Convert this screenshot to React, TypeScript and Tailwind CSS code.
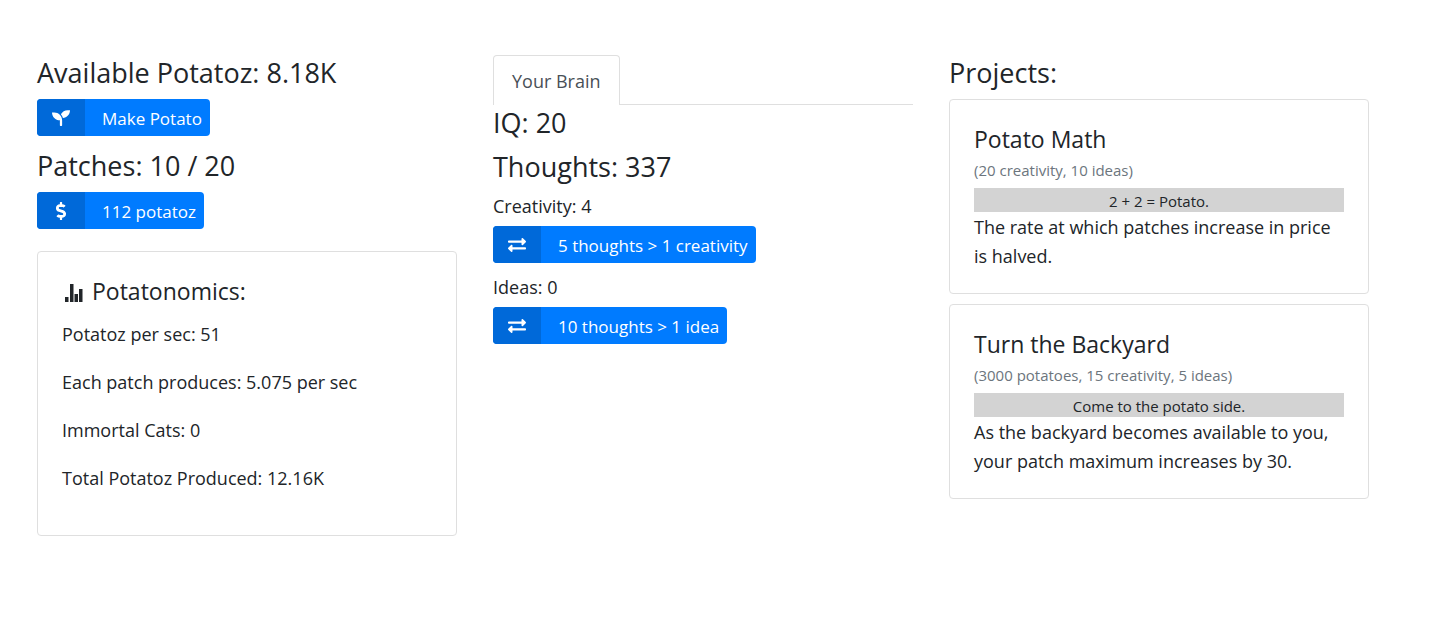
import type { ReactNode } from "react";
import { FaSeedling, FaDollarSign, FaExchangeAlt } from "react-icons/fa";

function ActionButton({ icon, children }: { icon: ReactNode; children: ReactNode }) {
  return (
    <button type="button" className="flex h-[37px] w-fit items-stretch overflow-hidden rounded bg-[#007bff] text-[17px] text-white">
      <span className="flex w-12 items-center justify-center bg-[#0069d9]">{icon}</span>
      <span className="flex items-center pl-[17px] pr-2 pt-px">{children}</span>
    </button>
  );
}

function Project({ title, cost, quote, children }: { title: string; cost: string; quote: string; children: ReactNode }) {
  return (
    <article className="rounded border border-[#dfdfdf] px-6 pb-[22px] pt-[25px]">
      <h3 className="mb-[3px] text-[23px] leading-7">{title}</h3>
      <p className="mb-1 text-[15px] leading-7 text-[#6c757d]">{cost}</p>
      <p className="mb-px bg-[#d3d3d3] pt-[2px] text-center text-[15px] leading-[22px]">{quote}</p>
      <p className="text-[18px] leading-[29px]">{children}</p>
    </article>
  );
}

const stats = [
  "Potatoz per sec: 51",
  "Each patch produces: 5.075 per sec",
  "Immortal Cats: 0",
  "Total Potatoz Produced: 12.16K",
];

export default function App() {
  return (
    <main className="grid grid-cols-3 items-start gap-9 bg-white pb-9 pl-[37px] pr-[74px] pt-[55px] font-['Open_Sans',sans-serif] text-[18px] leading-[29px] text-[#212529]">
      <section className="min-w-0">
        <h2 className="mb-2 text-[27px] leading-9">Available Potatoz: 8.18K</h2>
        <ActionButton icon={<FaSeedling className="size-[18px]" />}>Make Potato</ActionButton>
        <h2 className="mb-2 mt-3 text-[27px] leading-9">Patches: 10 / 20</h2>
        <ActionButton icon={<FaDollarSign className="size-[18px]" />}>112 potatoz</ActionButton>
        <div className="mt-[22px] rounded border border-[#dfdfdf] px-6 pb-[42px] pt-[25px]">
          <h3 className="mb-[15px] flex items-center gap-[9px] text-[23px] leading-7">
            <svg viewBox="0 0 18 18" className="ml-[3px] mt-1 size-[18px]" fill="currentColor" aria-hidden="true">
              <path d="M0 13h3.5v5H0zM5 0h3.5v18H5zM9.5 10h3.5v8H9.5zM14 5h3.5v13H14z" />
            </svg>
            Potatonomics:
          </h3>
          <div className="flex flex-col gap-[19px]">
            {stats.map((stat) => (
              <p key={stat}>{stat}</p>
            ))}
          </div>
        </div>
      </section>

      <section className="min-w-0">
        <div role="tablist" className="flex">
          <button type="button" role="tab" aria-selected="true" className="h-[50px] rounded-t border border-b-0 border-[#dfdfdf] px-[18px] pt-[2px] text-[#495057]">
            Your Brain
          </button>
          <span className="flex-1 border-b border-[#dfdfdf]" />
        </div>
        <h2 className="mb-2 text-[27px] leading-9">IQ: 20</h2>
        <h2 className="mb-[7px] text-[27px] leading-9">Thoughts: 337</h2>
        <p className="mb-[5px]">Creativity: 4</p>
        <ActionButton icon={<FaExchangeAlt className="size-[18px]" />}>5 thoughts &gt; 1 creativity</ActionButton>
        <p className="mb-[5px] mt-[10px]">Ideas: 0</p>
        <ActionButton icon={<FaExchangeAlt className="size-[18px]" />}>10 thoughts &gt; 1 idea</ActionButton>
      </section>

      <section className="min-w-0">
        <h2 className="mb-2 text-[27px] leading-9">Projects:</h2>
        <div className="flex flex-col gap-[10px]">
          <Project title="Potato Math" cost="(20 creativity, 10 ideas)" quote="2 + 2 = Potato.">
            The rate at which patches increase in price is halved.
          </Project>
          <Project title="Turn the Backyard" cost="(3000 potatoes, 15 creativity, 5 ideas)" quote="Come to the potato side.">
            As the backyard becomes available to you, your patch maximum increases by 30.
          </Project>
        </div>
      </section>
    </main>
  );
}
